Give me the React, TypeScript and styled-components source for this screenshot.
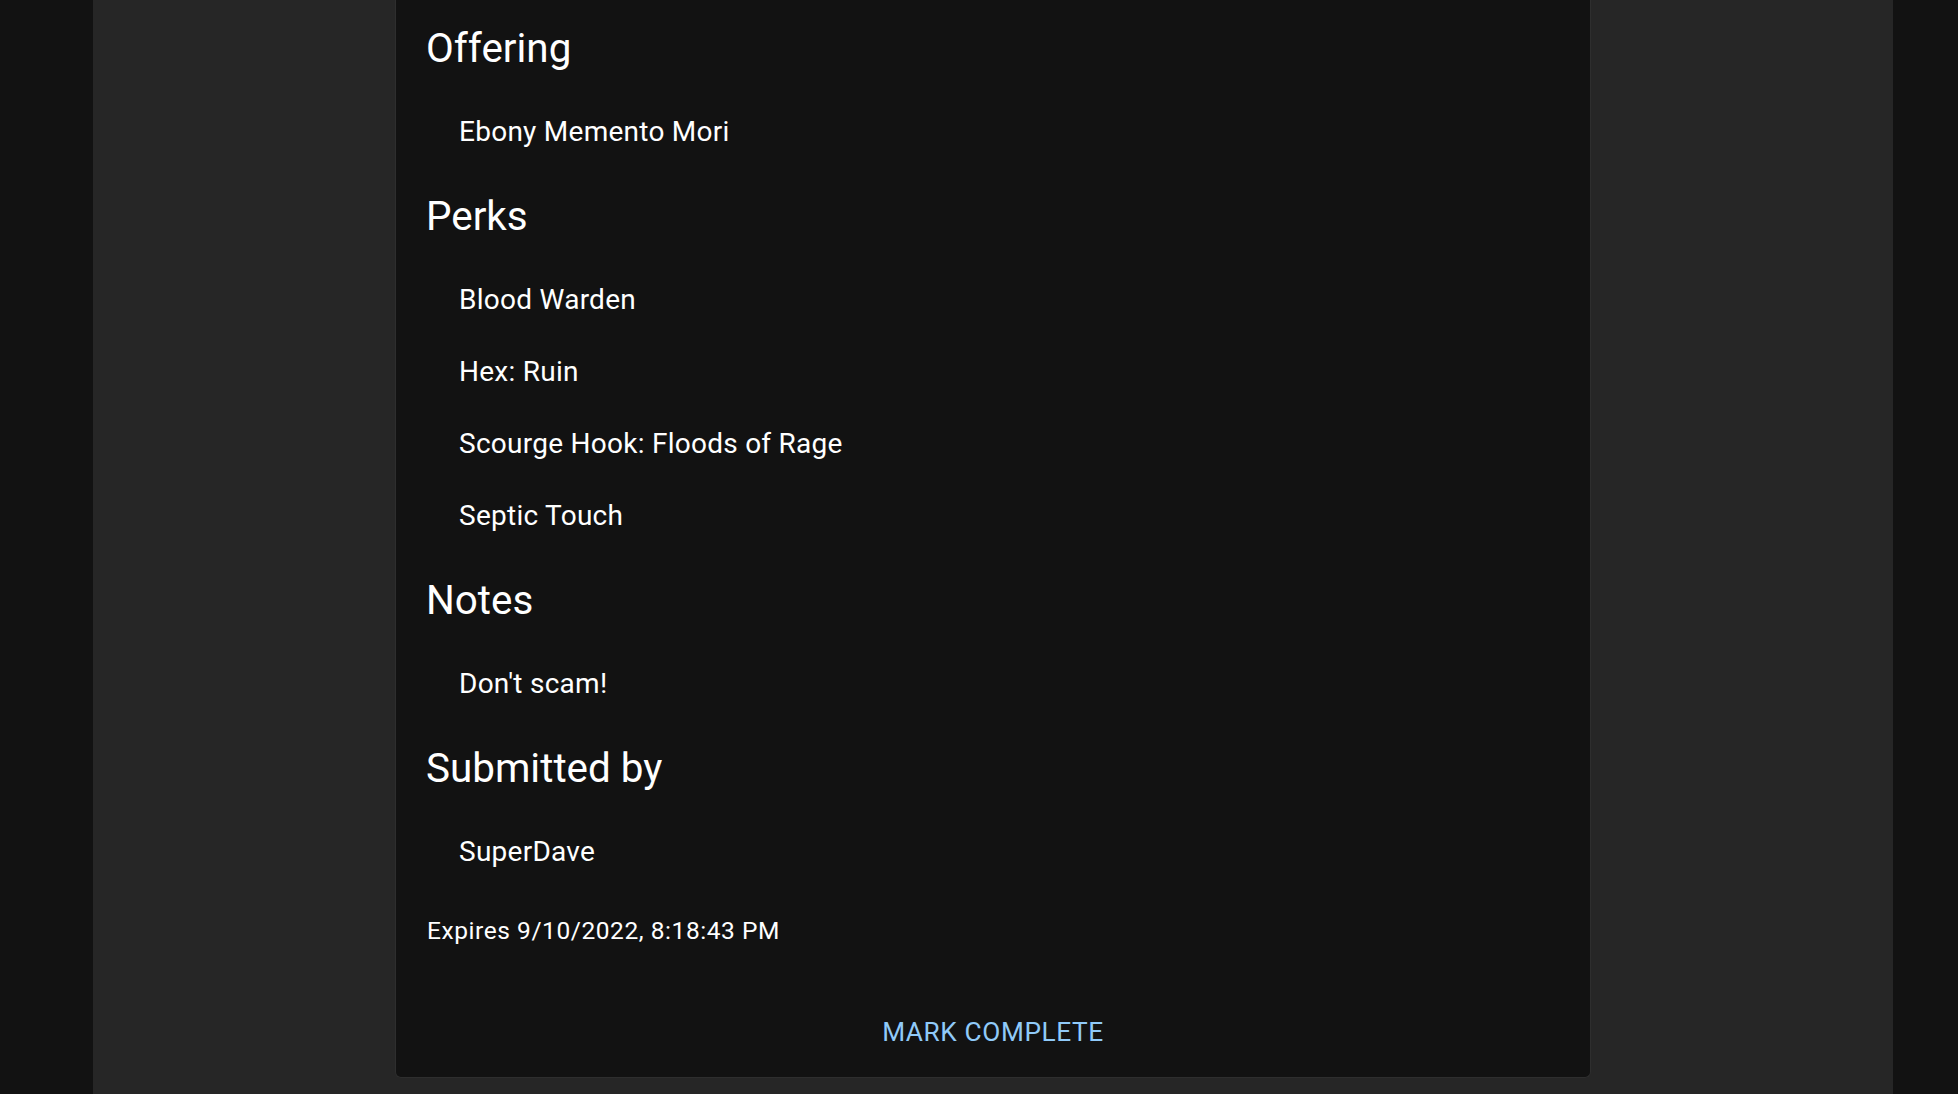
import React from "react";
import styled, { createGlobalStyle } from "styled-components";

const GlobalStyle = createGlobalStyle`
  html, body {
    margin: 0;
    padding: 0;
    background: #121212;
    color: #ffffff;
    font-family: Roboto, "Liberation Sans", Arial, sans-serif;
    overflow: hidden;
  }
  #root {
    height: 1094px;
  }
`;

const Page = styled.div`
  display: flex;
  height: 1094px;
  padding-left: 93px;
  background: #121212;
`;

const Panel = styled.main`
  width: 1800px;
  height: 100%;
  background: #262626;
  display: flex;
  justify-content: center;
  align-items: flex-start;
`;

const Card = styled.section`
  width: 1196px;
  box-sizing: border-box;
  background: #121212;
  border: 1px solid #2e2e2e;
  border-top: none;
  border-radius: 0 0 6px 6px;
  display: flex;
  flex-direction: column;
`;

const Content = styled.div`
  padding: 0 30px;
  display: flex;
  flex-direction: column;
`;

const Heading = styled.h2`
  margin: 20px 0;
  padding-top: 0.6px;
  height: 56px;
  box-sizing: border-box;
  font-size: 40.4px;
  font-weight: 400;
  line-height: 56px;
  letter-spacing: 0;
`;

const List = styled.ul`
  list-style: none;
  margin: 0;
  padding: 0;
`;

const Item = styled.li`
  padding: 15px 0 15px 33px;
  font-size: 28px;
  line-height: 42px;
  letter-spacing: 0.26px;
`;

const Expires = styled.p`
  margin: 25px 0 0 1px;
  font-size: 24.5px;
  line-height: 35px;
  letter-spacing: 0.56px;
`;

const Actions = styled.div`
  display: flex;
  justify-content: center;
  padding: 61px 0 22px;
`;

const TextButton = styled.button`
  background: none;
  border: none;
  padding: 0;
  color: #90caf9;
  font-family: Roboto, "Liberation Sans", Arial, sans-serif;
  font-size: 26.25px;
  font-weight: 400;
  line-height: 46px;
  letter-spacing: 0.6px;
  text-transform: uppercase;
  cursor: pointer;
`;

type Section = { title: string; items: string[] };

const sections: Section[] = [
  { title: "Offering", items: ["Ebony Memento Mori"] },
  {
    title: "Perks",
    items: ["Blood Warden", "Hex: Ruin", "Scourge Hook: Floods of Rage", "Septic Touch"],
  },
  { title: "Notes", items: ["Don't scam!"] },
  { title: "Submitted by", items: ["SuperDave"] },
];

export default function App() {
  return (
    <>
      <GlobalStyle />
      <Page>
        <Panel>
          <Card>
            <Content>
              {sections.map((s) => (
                <React.Fragment key={s.title}>
                  <Heading>{s.title}</Heading>
                  <List>
                    {s.items.map((it) => (
                      <Item key={it}>{it}</Item>
                    ))}
                  </List>
                </React.Fragment>
              ))}
              <Expires>Expires 9/10/2022, 8:18:43 PM</Expires>
            </Content>
            <Actions>
              <TextButton>Mark Complete</TextButton>
            </Actions>
          </Card>
        </Panel>
      </Page>
    </>
  );
}
